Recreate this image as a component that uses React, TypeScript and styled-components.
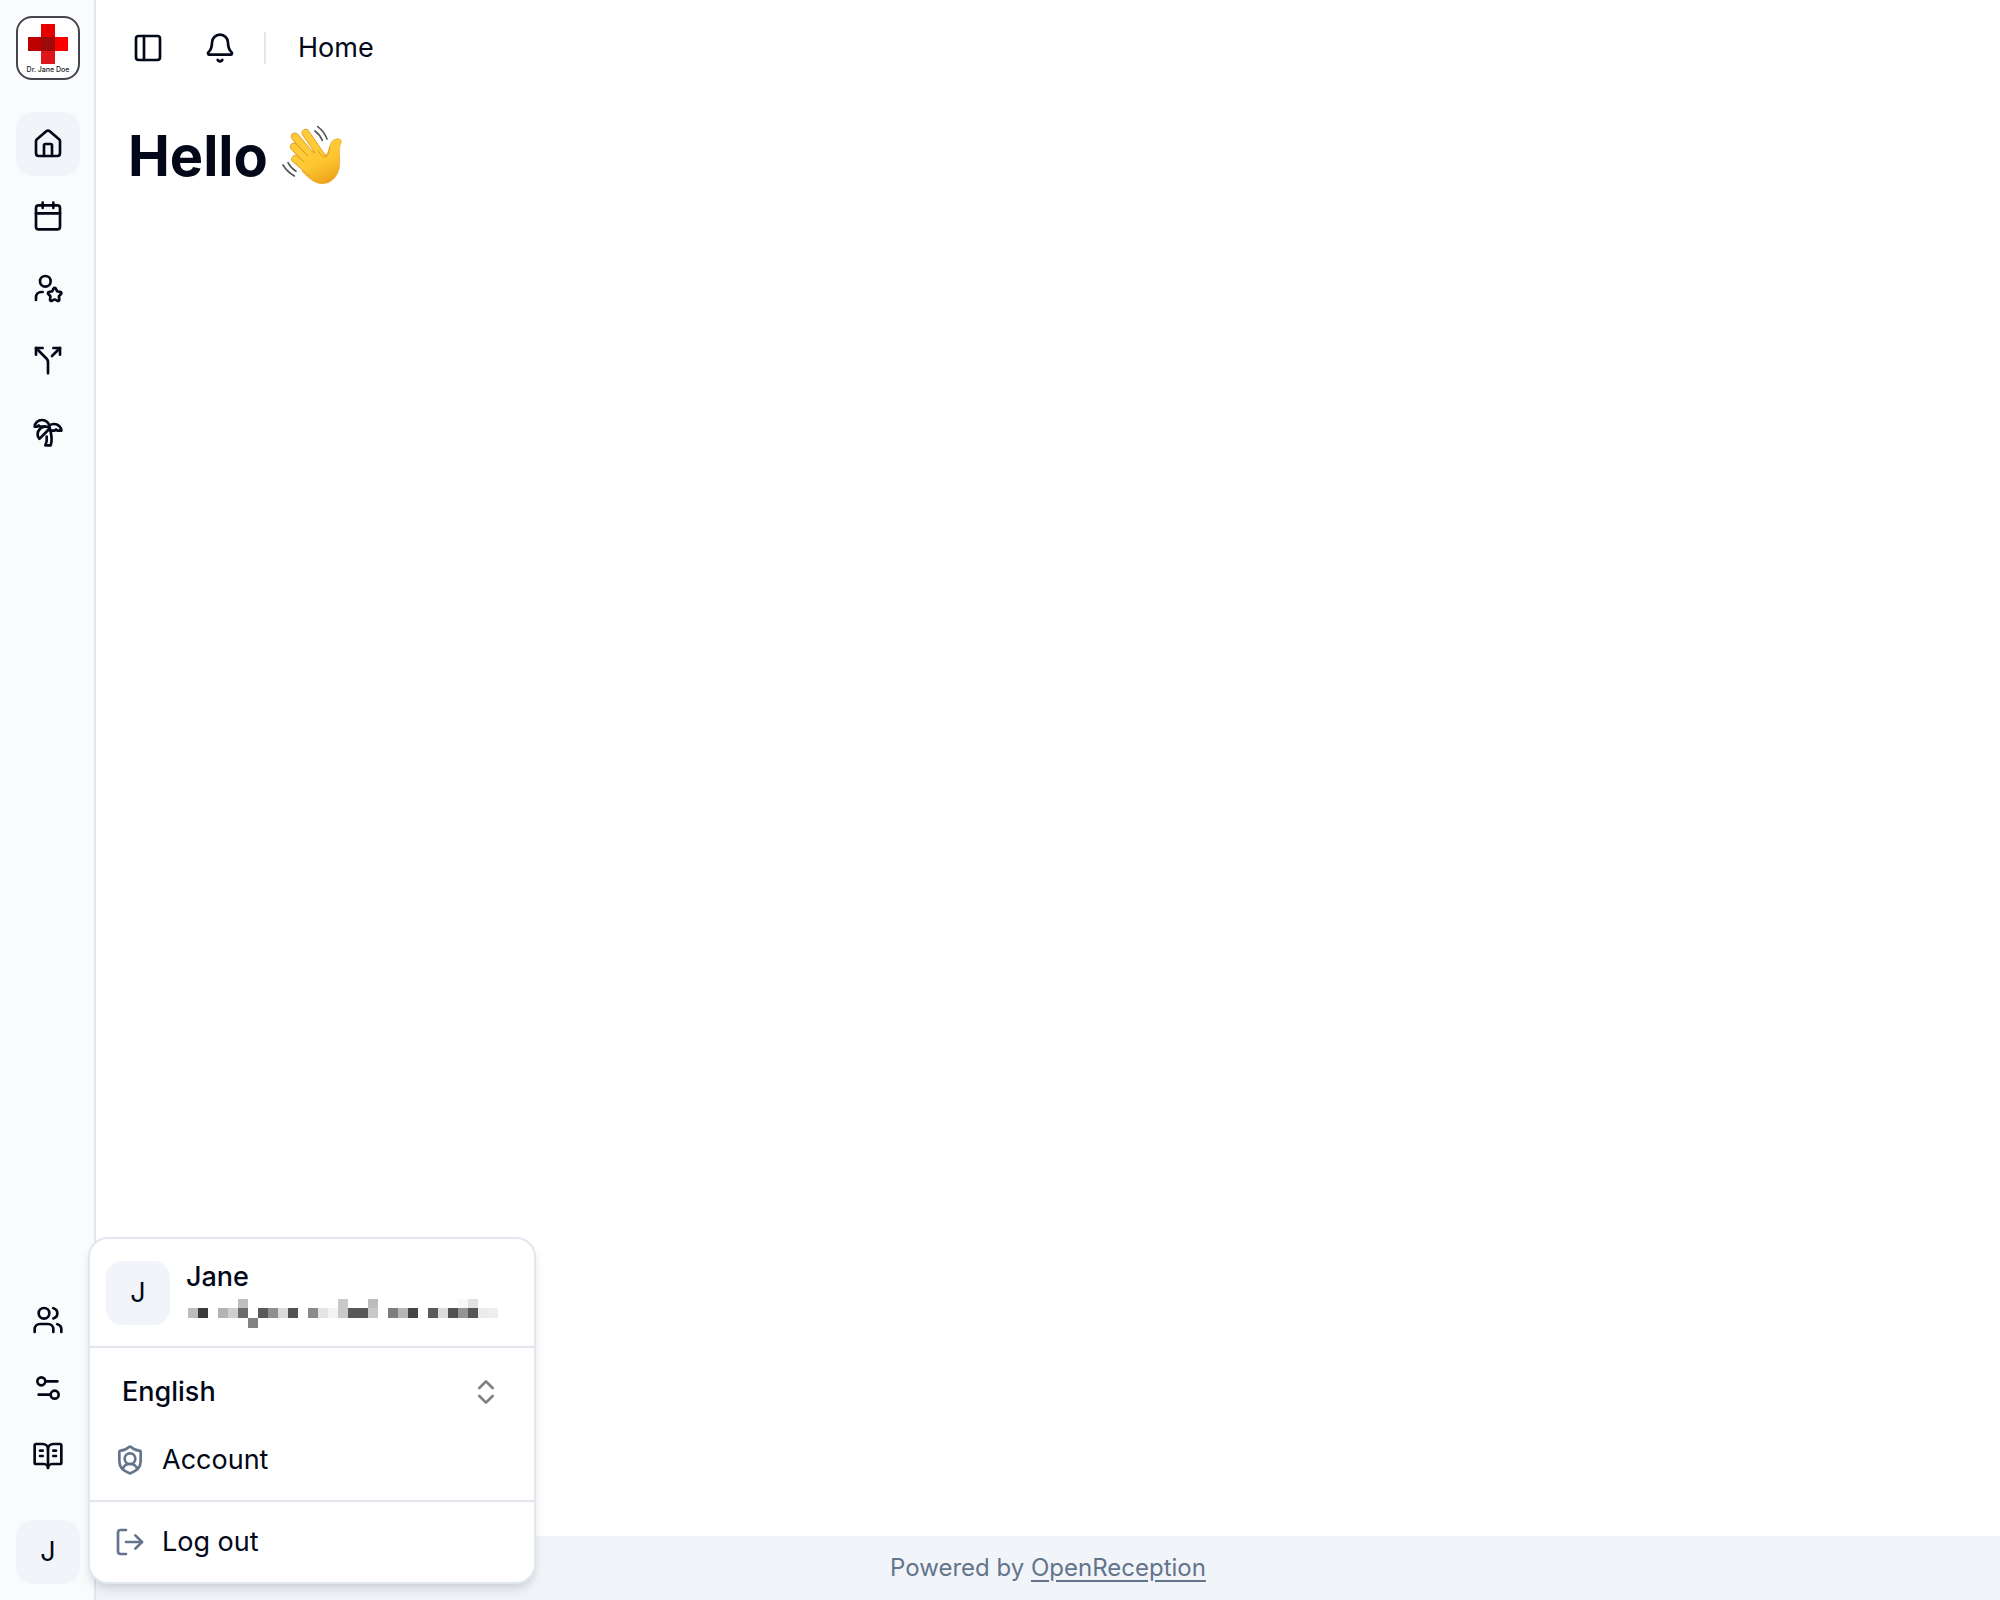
import React from "react";
import styled, { createGlobalStyle } from "styled-components";
import {
  Bell,
  BookOpenText,
  Calendar,
  ChevronsUpDown,
  House,
  LogOut,
  PanelLeft,
  Settings2,
  ShieldUser,
  Split,
  TreePalm,
  Users,
  UserStar,
} from "lucide-react";

const ink = "#020817";
const muted = "#64748b";
const line = "#e2e6ee";
const soft = "#f1f5f9";

const GlobalStyle = createGlobalStyle`
  *, *::before, *::after { box-sizing: border-box; }
  body {
    margin: 0;
    background: #fff;
    color: ${ink};
    font-family: Inter, "Liberation Sans", sans-serif;
    font-size: 27px;
    line-height: 36px;
  }
  button, select { font: inherit; color: inherit; }
  svg { display: block; flex: none; }
`;

const Layout = styled.div`
  display: flex;
  min-height: 100vh;
`;

const Sidebar = styled.aside`
  display: flex;
  flex-direction: column;
  flex: none;
  width: 96px;
  padding: 16px 14px 16px 16px;
  background: #f9fbfd;
  border-right: 2px solid ${line};
`;

const Logo = styled.a`
  display: flex;
  flex-direction: column;
  align-items: center;
  width: 64px;
  height: 64px;
  padding-top: 6px;
  background: #fff;
  border: 2px solid #45454f;
  border-radius: 16px;
  color: #222;
  font-size: 7px;
  font-weight: 500;
  line-height: 12px;
  text-decoration: none;
  white-space: nowrap;
`;

const Nav = styled.nav<{ $gap: number }>`
  display: flex;
  flex-direction: column;
  gap: ${(p) => p.$gap}px;
`;

const MainNav = styled(Nav)`
  margin-top: 32px;
`;

const FooterNav = styled(Nav)`
  margin-top: auto;
  margin-bottom: 32px;
`;

const NavLink = styled.a<{ $active?: boolean }>`
  display: flex;
  align-items: center;
  justify-content: center;
  width: 64px;
  height: 64px;
  border-radius: 16px;
  color: inherit;
  background: ${(p) => (p.$active ? soft : "transparent")};
`;

const UserArea = styled.div`
  position: relative;
  width: 64px;
`;

const Avatar = styled.span`
  display: flex;
  flex: none;
  align-items: center;
  justify-content: center;
  width: 64px;
  height: 64px;
  border-radius: 16px;
  background: ${soft};
`;

const AvatarButton = styled(Avatar).attrs({ as: "button" })`
  padding: 0;
  border: 0;
`;

const Menu = styled.div`
  position: absolute;
  left: calc(100% + 8px);
  bottom: 0;
  width: 448px;
  background: #fff;
  border: 2px solid ${line};
  border-radius: 20px;
  box-shadow: 0 8px 12px -2px rgba(15, 23, 42, 0.1), 0 4px 8px -4px rgba(15, 23, 42, 0.12);
`;

const Profile = styled.div`
  display: flex;
  align-items: center;
  gap: 16px;
  padding: 18px 16px;
`;

const ProfileText = styled.div`
  display: flex;
  flex-direction: column;
  gap: 4px;
  padding-top: 2px;
`;

const Name = styled.span`
  font-weight: 500;
`;

const MenuSection = styled.div<{ $top: number }>`
  display: flex;
  flex-direction: column;
  gap: 4px;
  padding: ${(p) => p.$top}px 8px 8px;
  border-top: 2px solid ${line};
`;

const SelectBox = styled.label`
  display: grid;
  align-items: center;
  height: 64px;

  > * { grid-area: 1 / 1; }
  > svg { justify-self: end; margin-right: 24px; color: #808080; pointer-events: none; }
`;

const Select = styled.select`
  appearance: none;
  width: 100%;
  height: 64px;
  padding: 0 24px;
  border: 0;
  background: transparent;
  font-weight: 500;
`;

const MenuItem = styled.button`
  display: flex;
  align-items: center;
  gap: 16px;
  height: 64px;
  padding: 0 16px;
  border: 0;
  background: transparent;
  text-align: left;

  > svg { color: ${muted}; }
`;

const Page = styled.div`
  display: flex;
  flex: 1;
  flex-direction: column;
  min-width: 0;
`;

const TopBar = styled.header`
  display: flex;
  align-items: center;
  height: 96px;
  padding: 0 20px;
`;

const IconButton = styled.button`
  display: flex;
  align-items: center;
  justify-content: center;
  width: 64px;
  height: 64px;
  margin-right: 8px;
  padding: 0;
  border: 0;
  border-radius: 16px;
  background: transparent;
`;

const Separator = styled.span`
  width: 2px;
  height: 32px;
  margin: 0 32px 0 4px;
  background: ${line};
`;

const Content = styled.main`
  flex: 1;
  padding: 24px 32px;
`;

const Title = styled.h1`
  display: flex;
  align-items: center;
  gap: 14px;
  margin: 0;
  font-size: 56px;
  font-weight: 700;
  line-height: 72px;

  > svg { margin-bottom: 2px; }
`;

const PageFooter = styled.footer`
  display: flex;
  align-items: center;
  justify-content: center;
  height: 64px;
  background: ${soft};
  color: ${muted};
  font-size: 24px;
  white-space: pre;
`;

const FooterLink = styled.a`
  color: inherit;
  text-decoration: underline;
  text-underline-offset: 4px;
`;

const Cross = () => (
  <svg width="40" height="40" viewBox="0 0 40 40" aria-hidden="true">
    <rect x="13" y="0" width="14" height="13" fill="#e60000" />
    <rect x="0" y="13" width="13" height="14" fill="#bd0000" />
    <rect x="27" y="13" width="13" height="14" fill="#fc0000" />
    <rect x="13" y="27" width="14" height="13" fill="#e01519" />
    <rect x="13" y="13" width="14" height="14" fill="#9c0a0a" />
  </svg>
);

const fingers = [
  "M107 68L158 142",
  "M75 79L132 146",
  "M72 109L122 162",
  "M76 146L120 184",
];

const WavingHand = () => (
  <svg width="60" height="60" viewBox="36 44 180 180" role="img" aria-label="Waving hand">
    <defs>
      <linearGradient id="skin" gradientUnits="userSpaceOnUse" x1="90" y1="60" x2="165" y2="220">
        <stop offset="0" stopColor="#ffd045" />
        <stop offset="0.65" stopColor="#fdc62f" />
        <stop offset="1" stopColor="#eda21c" />
      </linearGradient>
    </defs>
    <path
      d="M105 120L150 125L170 134C177 123 178 108 183 98C189 86 206 80 213 90C216 97 208 105 208 116C207 130 211 148 208 170C204 199 182 222 153 220C134 218 116 203 97 184Z"
      fill="url(#skin)"
      stroke="#e8a326"
      strokeWidth="2"
    />
    {fingers.map((d) => (
      <g key={d} fill="none" strokeLinecap="round">
        <path d={d} stroke="#dc9220" strokeWidth="24" />
        <path d={d} stroke="#ffca37" strokeWidth="20" />
      </g>
    ))}
    <path
      d="M121 133C135 124 151 129 172 142C180 149 199 129 203 148C207 185 181 211 153 211C134 211 115 193 104 176C99 164 105 145 121 133Z"
      fill="url(#skin)"
    />
    <path d="M144 120C152 133 159 140 166 140C173 138 177 122 180 108" fill="none" stroke="#df9822" strokeWidth="3" />
    <g fill="none" stroke="#55575b" strokeWidth="5" strokeLinecap="round">
      <path d="M143 49Q162 63 171 86" />
      <path d="M135 62Q149 72 157 90" />
      <path d="M39 164Q51 184 73 197" />
      <path d="M54 157Q63 174 78 183" />
    </g>
  </svg>
);

/* [column, row, grey value] of each block of the obscured e-mail address */
const blocks: [number, number, number][] = [
  [0, 1, 188], [1, 1, 60], [3, 1, 179], [4, 1, 207], [5, 0, 190], [5, 1, 107],
  [6, 2, 129], [7, 1, 89], [8, 1, 144], [9, 1, 218], [10, 1, 81], [12, 1, 138],
  [13, 1, 228], [14, 1, 243], [15, 0, 201], [15, 1, 201], [16, 1, 88], [17, 1, 88],
  [18, 0, 188], [18, 1, 200], [20, 1, 125], [21, 1, 182], [22, 1, 69], [24, 1, 89],
  [25, 1, 220], [26, 1, 81], [27, 0, 248], [27, 1, 149], [28, 0, 225], [28, 1, 86],
  [29, 1, 235], [30, 1, 238],
];

const HiddenEmail = () => (
  <svg width="312" height="29" viewBox="-2 1 312 29" shapeRendering="crispEdges" aria-hidden="true">
    {blocks.map(([col, row, v]) => (
      <rect key={`${col}-${row}`} x={col * 10} y={row * 10} width="10" height="10" fill={`rgb(${v},${v},${v})`} />
    ))}
  </svg>
);

const mainLinks = [
  { label: "Home", Icon: House },
  { label: "Calendar", Icon: Calendar },
  { label: "Agents", Icon: UserStar },
  { label: "Channels", Icon: Split },
  { label: "Absences", Icon: TreePalm },
];

const footerLinks = [
  { label: "Staff", Icon: Users },
  { label: "Settings", Icon: Settings2 },
  { label: "Documentation", Icon: BookOpenText },
];

export default function App() {
  return (
    <>
      <GlobalStyle />
      <Layout>
        <Sidebar>
          <Logo href="#">
            <Cross />
            Dr. Jane Doe
          </Logo>
          <MainNav $gap={8} aria-label="Main">
            {mainLinks.map(({ label, Icon }, i) => (
              <NavLink key={label} href="#" aria-label={label} $active={i === 0}>
                <Icon size={32} />
              </NavLink>
            ))}
          </MainNav>
          <FooterNav $gap={4} aria-label="Administration">
            {footerLinks.map(({ label, Icon }) => (
              <NavLink key={label} href="#" aria-label={label}>
                <Icon size={32} />
              </NavLink>
            ))}
          </FooterNav>
          <UserArea>
            <AvatarButton aria-label="User menu">J</AvatarButton>
            <Menu>
              <Profile>
                <Avatar>J</Avatar>
                <ProfileText>
                  <Name>Jane</Name>
                  <HiddenEmail />
                </ProfileText>
              </Profile>
              <MenuSection $top={12}>
                <SelectBox>
                  <Select aria-label="Language" defaultValue="en">
                    <option value="en">English</option>
                  </Select>
                  <ChevronsUpDown size={32} />
                </SelectBox>
                <MenuItem>
                  <ShieldUser size={32} />
                  Account
                </MenuItem>
              </MenuSection>
              <MenuSection $top={8}>
                <MenuItem>
                  <LogOut size={32} />
                  Log out
                </MenuItem>
              </MenuSection>
            </Menu>
          </UserArea>
        </Sidebar>
        <Page>
          <TopBar>
            <IconButton aria-label="Toggle sidebar">
              <PanelLeft size={32} />
            </IconButton>
            <IconButton aria-label="Notifications">
              <Bell size={32} />
            </IconButton>
            <Separator />
            <span>Home</span>
          </TopBar>
          <Content>
            <Title>
              Hello
              <WavingHand />
            </Title>
          </Content>
          <PageFooter>
            Powered by <FooterLink href="#">OpenReception</FooterLink>
          </PageFooter>
        </Page>
      </Layout>
    </>
  );
}
